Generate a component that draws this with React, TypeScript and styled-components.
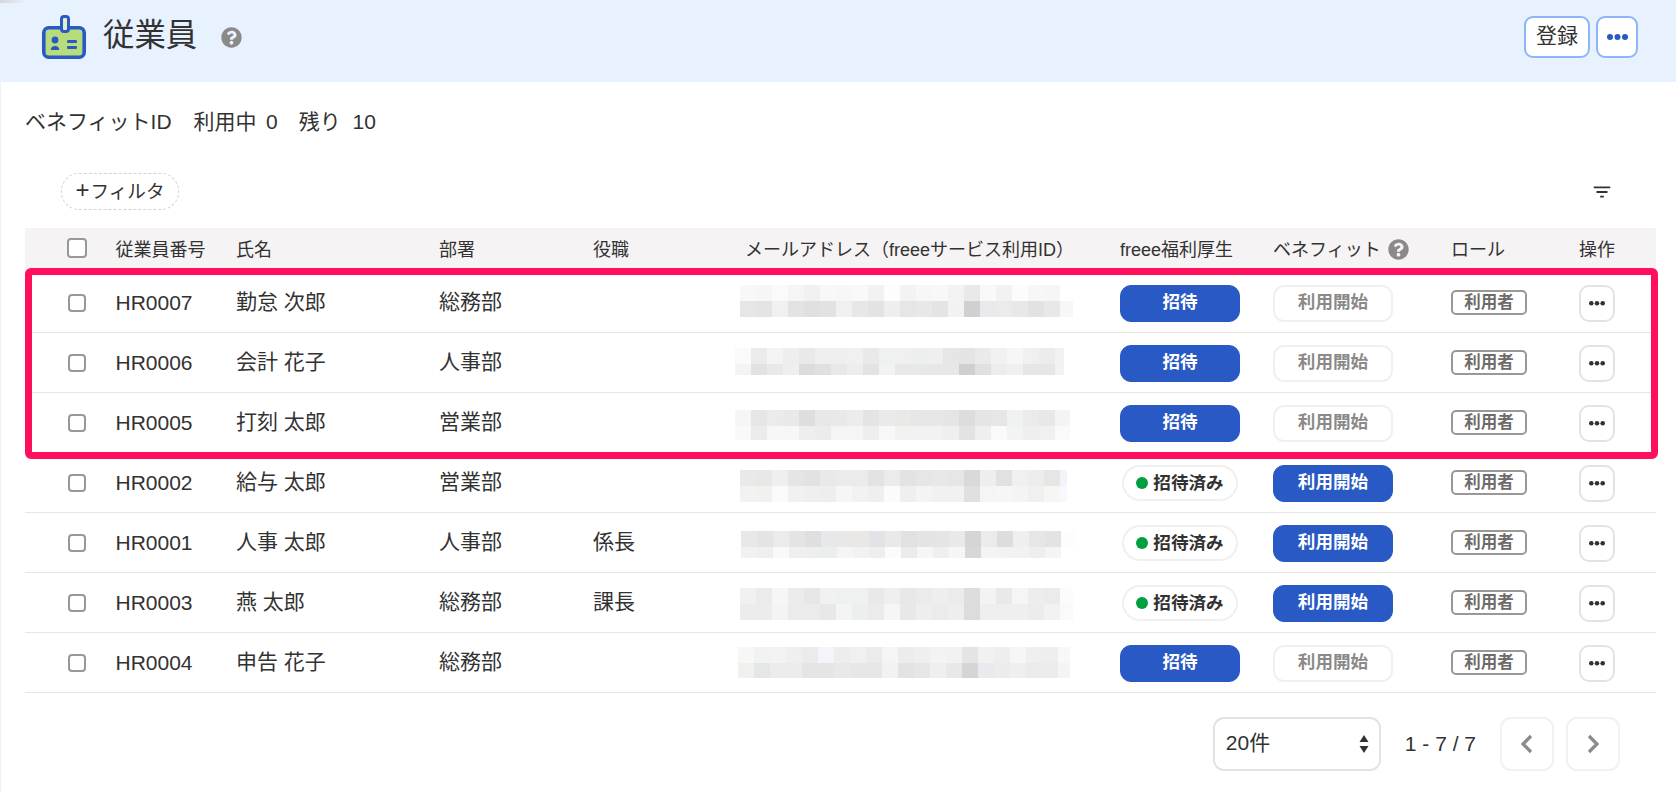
import React from "react";
import styled, { createGlobalStyle } from "styled-components";
import { FaQuestionCircle } from "react-icons/fa";
import { MdFilterList } from "react-icons/md";

const Global = createGlobalStyle`
  html, body { margin: 0; padding: 0; background: #fff; }
  body {
    font-family: "Liberation Sans", "Noto Sans CJK JP", sans-serif;
    color: #323232;
    font-size: 21px;
    overflow: hidden;
  }
  #root { min-height: 793px; border-left: 1px solid #e8f1fe; box-sizing: border-box; }
`;

const Page = styled.div`
  display: flex;
  flex-direction: column;
  height: 793px;
`;

const CornerShade = styled.div`
  position: absolute;
  top: 0;
  left: 0;
  width: 26px;
  height: 3px;
  background: linear-gradient(90deg, #d4d6da, #e8f1fe);
`;

const Header = styled.header`
  height: 82px;
  background: #e8f1fe;
  display: flex;
  align-items: flex-start;
  padding: 15px 38px 0 41px;
  box-sizing: border-box;
  flex: none;
`;

const Title = styled.h1`
  margin: 0 0 0 17px;
  font-size: 31.4px;
  line-height: 42px;
  font-weight: 400;
  color: #323232;
`;

const HelpMark = styled(FaQuestionCircle)<{ $size: number }>`
  color: #8c8989;
  width: ${(p) => p.$size}px;
  height: ${(p) => p.$size}px;
  flex: none;
`;

const TitleHelp = styled.span`
  display: flex;
  margin: 12px 0 0 24px;
`;

const HeaderActions = styled.div`
  margin-left: auto;
  display: flex;
  gap: 6px;
  margin-top: 1px;
`;

const HeaderButton = styled.button<{ $wide?: boolean }>`
  width: ${(p) => (p.$wide ? 66 : 42)}px;
  height: 42px;
  padding: 0 0 ${(p) => (p.$wide ? 6 : 0)}px;
  display: flex;
  align-items: center;
  justify-content: center;
  background: #fff;
  border: 2px solid #8db5f8;
  border-radius: 9px;
  font: inherit;
  color: #323232;
`;

const Info = styled.div`
  margin: 20px 0 0 24px;
  height: 40px;
  line-height: 40px;
  white-space: pre;
  color: #323232;
`;

const InfoGap = styled.span<{ $w: number }>`
  display: inline-block;
  width: ${(p) => p.$w}px;
`;

const Toolbar = styled.div`
  margin: 31px 63px 0 60px;
  height: 36px;
  display: flex;
  align-items: center;
  justify-content: space-between;
`;

const FilterPill = styled.div`
  width: 118px;
  height: 37px;
  padding-bottom: 3px;
  box-sizing: border-box;
  border: 1px dashed #d4d2d2;
  border-radius: 18px;
  display: flex;
  align-items: center;
  justify-content: center;
  font-size: 18.6px;
  color: #323232;
`;

const FilterPlus = styled.span`
  font-size: 24px;
  line-height: 24px;
  margin-right: 1px;
`;

const FilterIcon = styled(MdFilterList)`
  width: 22px;
  height: 22px;
  margin-top: 2px;
  color: #323232;
`;

const Table = styled.div`
  margin: 19px 20px 0 24px;
`;

const COLUMNS = "90.5px 120.5px 203px 154px 142px 385px 153px 178px 128px 1fr";

const HeadRow = styled.div`
  display: grid;
  grid-template-columns: ${COLUMNS};
  height: 45px;
  padding-bottom: 5px;
  box-sizing: border-box;
  background: #f5f3f4;
  align-items: center;
  font-size: 18px;
  color: #323232;
`;

const HeadCell = styled.div<{ $inset?: number }>`
  display: flex;
  align-items: center;
  gap: 7px;
  white-space: nowrap;
  padding-left: ${(p) => p.$inset ?? 0}px;
  svg {
    margin-top: 2px;
  }
`;

const CheckCell = styled.div`
  padding-left: 42px;
  display: flex;
  align-items: center;
`;

const Checkbox = styled.span<{ $big?: boolean }>`
  display: block;
  width: ${(p) => (p.$big ? 20 : 18)}px;
  height: ${(p) => (p.$big ? 20 : 18)}px;
  box-sizing: border-box;
  border: 2px solid #9a9797;
  border-radius: 4px;
  background: #fff;
  margin-left: ${(p) => (p.$big ? 0 : 1)}px;
`;

const Rows = styled.div`
  position: relative;
`;

const Highlight = styled.div`
  position: absolute;
  top: -5px;
  left: 0;
  right: -2px;
  height: 191px;
  box-sizing: border-box;
  border: 7px solid #ff0f5c;
  border-radius: 6px;
  pointer-events: none;
`;

const Row = styled.div`
  display: grid;
  grid-template-columns: ${COLUMNS};
  height: 60px;
  box-sizing: border-box;
  border-bottom: 1px solid #e6e6e6;
  align-items: center;
  color: #323232;
`;

const Cell = styled.div`
  white-space: nowrap;
`;

const TextCell = styled.div`
  white-space: nowrap;
  padding-bottom: 5px;
`;

const MailCell = styled.div`
  align-self: start;
  height: 59px;
`;

const Mosaic = styled.svg<{ $x: number; $y: number }>`
  display: block;
  margin-left: ${(p) => p.$x}px;
  margin-top: ${(p) => p.$y}px;
`;

const ActionButton = styled.button<{ $tone: "primary" | "disabled" }>`
  width: 120px;
  height: 37px;
  margin-top: 2px;
  box-sizing: border-box;
  border-radius: 11px;
  font: inherit;
  font-size: 17.6px;
  font-weight: 700;
  display: flex;
  align-items: center;
  justify-content: center;
  padding: 0 0 6px;
  background: ${(p) => (p.$tone === "primary" ? "#2859c5" : "#fff")};
  color: ${(p) => (p.$tone === "primary" ? "#fff" : "#8c8989")};
  border: ${(p) => (p.$tone === "primary" ? "1px solid #2859c5" : "2px solid #f0f0f0")};
`;

const InvitedPill = styled.div`
  width: 116px;
  height: 36px;
  margin-left: 2px;
  box-sizing: border-box;
  border: 2px solid #f0f0f0;
  border-radius: 18px;
  display: flex;
  align-items: center;
  justify-content: center;
  gap: 5px;
  font-size: 17.6px;
  font-weight: 700;
  color: #323232;
`;

const InvitedText = styled.span`
  padding-bottom: 3px;
`;

const GreenDot = styled.span`
  width: 12px;
  height: 12px;
  border-radius: 50%;
  background: #00a040;
  flex: none;
`;

const RoleTag = styled.span`
  display: flex;
  align-items: center;
  justify-content: center;
  width: 76px;
  height: 25px;
  padding-bottom: 4px;
  box-sizing: border-box;
  border: 2px solid #9a9797;
  border-radius: 5px;
  font-size: 16.5px;
  font-weight: 700;
  color: #6e6b6b;
`;

const MoreButton = styled.button`
  width: 36px;
  height: 37px;
  margin-top: 2px;
  padding: 0;
  background: #fff;
  border: 2px solid #e4e3e3;
  border-radius: 10px;
  display: flex;
  align-items: center;
  justify-content: center;
`;

const Pagination = styled.div`
  margin: 24px 56px 0 0;
  display: flex;
  justify-content: flex-end;
  align-items: center;
`;

const PerPage = styled.div`
  width: 168px;
  height: 54px;
  box-sizing: border-box;
  border: 2px solid #e3e3e3;
  border-radius: 11px;
  padding: 0 10px 0 11px;
  display: flex;
  align-items: center;
  justify-content: space-between;
  color: #323232;
`;

const PerPageLabel = styled.span`
  padding-bottom: 6px;
`;

const PageInfo = styled.span`
  margin: 0 24px 0 24px;
  white-space: nowrap;
  color: #323232;
`;

const PageButton = styled.button<{ $next?: boolean }>`
  width: 54px;
  height: 54px;
  padding: 0;
  margin-left: ${(p) => (p.$next ? 12 : 0)}px;
  background: #fff;
  border: 2px solid #f1f1f1;
  border-radius: 11px;
  display: flex;
  align-items: center;
  justify-content: center;
`;

const Dots = ({ color, r, gap }: { color: string; r: number; gap: number }) => (
  <svg width={gap * 2 + r * 2} height={r * 2} viewBox={`0 0 ${gap * 2 + r * 2} ${r * 2}`}>
    <circle cx={r} cy={r} r={r} fill={color} />
    <circle cx={r + gap} cy={r} r={r} fill={color} />
    <circle cx={r + gap * 2} cy={r} r={r} fill={color} />
  </svg>
);

const BadgeIcon = () => (
  <svg width="44" height="44" viewBox="0 0 44 44" style={{ flex: "none" }}>
    <rect x="1.8" y="12.8" width="40.4" height="29.4" rx="5" fill="#b7dc7d" stroke="#2859c5" strokeWidth="3.6" />
    <rect x="19.5" y="1.5" width="7" height="15" rx="2.5" fill="#e4eecb" stroke="#2859c5" strokeWidth="3" />
    <circle cx="13" cy="25" r="3.4" fill="#2859c5" />
    <path d="M8.8 35c0-3 1.8-4 4.2-4s4.2 1 4.2 4z" fill="#2859c5" />
    <rect x="25" y="25" width="10" height="3" rx="1.2" fill="#2859c5" />
    <rect x="25" y="31" width="10" height="3" rx="1.2" fill="#2859c5" />
  </svg>
);

type Strip = { x: number; y: number; h2: number; last: number; top: string; bottom: string };

const rows: {
  no: string;
  name: string;
  dept: string;
  title: string;
  invited: boolean;
  strip: Strip;
}[] = [
  {
    no: "HR0007", name: "勤怠 次郎", dept: "総務部", title: "", invited: false,
    strip: {
      x: 5, y: 12, h2: 16, last: 13,
      top: "f8f8f8 f6f6f6 fafafa f5f5f5 f1f1f1 f8f8f8 f7f7f7 f9f9f9 f2f2f2 fdfdfd f3f3f3 f7f7f7 f8f8f8 f3f3f3 e9e9e9 f9f9f9 f2f2f2 fcfcfc f7f7f7 f6f6f6 ffffff",
      bottom: "e6e6e6 e4e4e4 eff0f0 e3e3e3 e0e0e2 e2e2e2 eff0f0 e7e7e9 e4e2e3 eeeeee e6e6e6 e8e8e8 e4e4e4 f2f2f2 d0d0d0 e9eaed ebebeb e8e8e8 e2e2e2 eae8e6 f6f7f9",
    },
  },
  {
    no: "HR0006", name: "会計 花子", dept: "人事部", title: "", invited: false,
    strip: {
      x: 0, y: 15, h2: 11, last: 9,
      top: "fafafa ebebeb f4f4f4 eeeeee e9e9e9 efefef efefef f0f0f0 e9e9e9 eff0f0 eff0f0 edeeee eeefef e6e6e6 e4e4e4 eaeaea f1f1f1 f6f6f6 f0f0f0 ececec f1f2f4",
      bottom: "f5f4f3 e2e2e2 e9e9e7 efefef dcdcdc e0e0e0 e8e8e6 ecedef e3e3e5 f2f2f2 e9e8e6 e7e8ea e7e7e9 e7e7e7 cfcfcd dfe0e2 eceded eff0f2 e6e6e6 e6e6e6 f2f2f4",
    },
  },
  {
    no: "HR0005", name: "打刻 太郎", dept: "営業部", title: "", invited: false,
    strip: {
      x: 0, y: 17, h2: 14, last: 15,
      top: "f6f6f6 e6e6e6 ebebeb e8e9eb dedede e8e8e8 e9e9e9 ebecee e4e4e4 eaeaea e9e9e7 e5e6e8 e7e7e7 e6e5e3 dddddd e4e5e7 e6e6e6 f0f1f3 ebebeb e8e8e8 f3f5f4",
      bottom: "f9f9f9 ebebeb f7f7f7 f7f7f7 eeeeee ececec f5f5f3 f5f5f5 eeeeee f8f8f8 f2f2f0 f2f2f2 f2f2f2 efefef e3e3e3 efefef fafafa f2f4f3 efefef f0f0f0 fafafa",
    },
  },
  {
    no: "HR0002", name: "給与 太郎", dept: "営業部", title: "", invited: true,
    strip: {
      x: 5, y: 17, h2: 16, last: 7,
      top: "e9e9e9 e9e8e6 eef0ef e5e5e5 e2e2e2 e9e9e9 eaebea eaebea e3e3e5 ebebeb e3e3e3 e6e6e6 e8e8e8 e6e6e6 d9d9d9 edeef0 e1e1e1 f0f0f0 ededed e6e6e6 f3f4f9",
      bottom: "f2f2f2 f1f1ef fbfbfb f1f1f1 efefef eeeeee f6f6f6 f1f3f2 efefef fbfbfb efefef f4f4f4 f1f1f1 f1f1ef e0e0e0 f5f5f5 f6f6f6 f4f4f4 f0f0f0 f6f6f3 f8f9fc",
    },
  },
  {
    no: "HR0001", name: "人事 太郎", dept: "人事部", title: "係長", invited: true,
    strip: {
      x: 6, y: 18, h2: 11, last: 15,
      top: "e8e8e8 e3e5e4 ecebe9 e4e4e4 dfdfe1 e6e8ea e9e8e6 e9e8e6 e2e3e7 e9e9e9 e1e1df e4e4e4 e4e5e7 e9e9e9 d4d5d5 ebebeb dddddd efefef e6e6e6 e3e3e1 fcfdff",
      bottom: "f1f1f1 efefef f9f9f9 efefef edefee ecedee f5f5f5 f2f2f2 eeeeee fbfbfb ebebeb f6f6f6 efefef f6f6f6 d6d8d7 f4f4f4 f3f3f3 f2f2f2 eeeeee f5f4f2 feffff",
    },
  },
  {
    no: "HR0003", name: "燕 太郎", dept: "総務部", title: "課長", invited: true,
    strip: {
      x: 5, y: 15, h2: 16, last: 13,
      top: "f1f1f1 ebebeb f6f6f6 ececec e7e7e7 f1f1f1 eff1f0 eff1f0 e9e9e9 efefef e8e8e8 ebebeb eeeeee ebebeb dddddd f2f3f5 e9e9e9 f5f5f5 ededed ecebe9 fbfcfe",
      bottom: "ececec edecea f3f5f4 ebebeb ebebeb e8e8e8 f3f5f4 edefee ebebeb f6f6f6 e8e8e8 eeeeee ebebeb eeeeee dcdcda efefef efefef efefef ececec f2f2f2 f9fafc",
    },
  },
  {
    no: "HR0004", name: "申告 花子", dept: "総務部", title: "", invited: false,
    strip: {
      x: 3, y: 14, h2: 15, last: 12,
      top: "f7f7f5 f1f3f2 f3f3f3 efefef ebebeb f3f5f8 ededed f0f0f0 ebebeb f5f5f5 ececec efefef f3f3f3 f1f3f2 e4e4e4 f1f1f1 eeeeee f6f6f6 efefef eeeeee f8f8f8",
      bottom: "f1f0ee e5e7e6 ebedec edecea e5e5e5 e5e5e5 e8eaea e7e7e7 e7e7e7 f2f2f2 e3e3e3 e6e6e6 efefef e8e8e8 d5d5d5 e9eaee ececec efefef ebebeb ebebeb f5f4f5",
    },
  },
];

const Blur = ({ strip }: { strip: Strip }) => {
  const width = 320 + strip.last;
  const height = 16 + strip.h2;
  const drawLine = (line: string, y: number, h: number) =>
    line.split(" ").map((c, i) => (
      <rect key={`${y}-${i}`} x={i * 16} y={y} width={i === 20 ? strip.last : 16} height={h} fill={`#${c}`} />
    ));
  return (
    <Mosaic $x={strip.x} $y={strip.y} width={width} height={height} viewBox={`0 0 ${width} ${height}`}>
      {drawLine(strip.top, 0, 16)}
      {drawLine(strip.bottom, 16, strip.h2)}
    </Mosaic>
  );
};

export default function App() {
  return (
    <Page>
      <Global />
      <Header>
        <BadgeIcon />
        <Title>従業員</Title>
        <TitleHelp>
          <HelpMark $size={21} />
        </TitleHelp>
        <HeaderActions>
          <HeaderButton $wide>登録</HeaderButton>
          <HeaderButton>
            <Dots color="#2859c5" r={3} gap={7.5} />
          </HeaderButton>
        </HeaderActions>
      </Header>
      <CornerShade />
      <Info>
        ベネフィットID
        <InfoGap $w={22} />
        利用中
        <InfoGap $w={9.5} />
        0
        <InfoGap $w={21} />
        残り  10
      </Info>
      <Toolbar>
        <FilterPill>
          <FilterPlus>+</FilterPlus>フィルタ
        </FilterPill>
        <FilterIcon />
      </Toolbar>
      <Table>
        <HeadRow>
          <CheckCell>
            <Checkbox $big />
          </CheckCell>
          <HeadCell>従業員番号</HeadCell>
          <HeadCell>氏名</HeadCell>
          <HeadCell>部署</HeadCell>
          <HeadCell>役職</HeadCell>
          <HeadCell $inset={10}>メールアドレス（freeeサービス利用ID）</HeadCell>
          <HeadCell>freee福利厚生</HeadCell>
          <HeadCell>
            ベネフィット
            <HelpMark $size={21} />
          </HeadCell>
          <HeadCell>ロール</HeadCell>
          <HeadCell>操作</HeadCell>
        </HeadRow>
        <Rows>
          {rows.map((r) => (
            <Row key={r.no}>
              <CheckCell>
                <Checkbox />
              </CheckCell>
              <Cell>{r.no}</Cell>
              <TextCell>{r.name}</TextCell>
              <TextCell>{r.dept}</TextCell>
              <TextCell>{r.title}</TextCell>
              <MailCell>
                <Blur strip={r.strip} />
              </MailCell>
              <Cell>
                {r.invited ? (
                  <InvitedPill>
                    <GreenDot />
                    <InvitedText>招待済み</InvitedText>
                  </InvitedPill>
                ) : (
                  <ActionButton $tone="primary">招待</ActionButton>
                )}
              </Cell>
              <Cell>
                <ActionButton $tone={r.invited ? "primary" : "disabled"}>利用開始</ActionButton>
              </Cell>
              <Cell>
                <RoleTag>利用者</RoleTag>
              </Cell>
              <Cell>
                <MoreButton>
                  <Dots color="#323232" r={2.3} gap={5.7} />
                </MoreButton>
              </Cell>
            </Row>
          ))}
          <Highlight />
        </Rows>
      </Table>
      <Pagination>
        <PerPage>
          <PerPageLabel>20件</PerPageLabel>
          <svg width="10" height="18" viewBox="0 0 10 18">
            <path d="M5 0l4.5 7h-9zM5 18l-4.5-7h9z" fill="#323232" />
          </svg>
        </PerPage>
        <PageInfo>1 - 7 / 7</PageInfo>
        <PageButton>
          <svg width="14" height="20" viewBox="0 0 14 20">
            <path d="M11 2L3 10l8 8" fill="none" stroke="#8c8989" strokeWidth="3.2" />
          </svg>
        </PageButton>
        <PageButton $next>
          <svg width="14" height="20" viewBox="0 0 14 20">
            <path d="M3 2l8 8-8 8" fill="none" stroke="#8c8989" strokeWidth="3.2" />
          </svg>
        </PageButton>
      </Pagination>
    </Page>
  );
}
